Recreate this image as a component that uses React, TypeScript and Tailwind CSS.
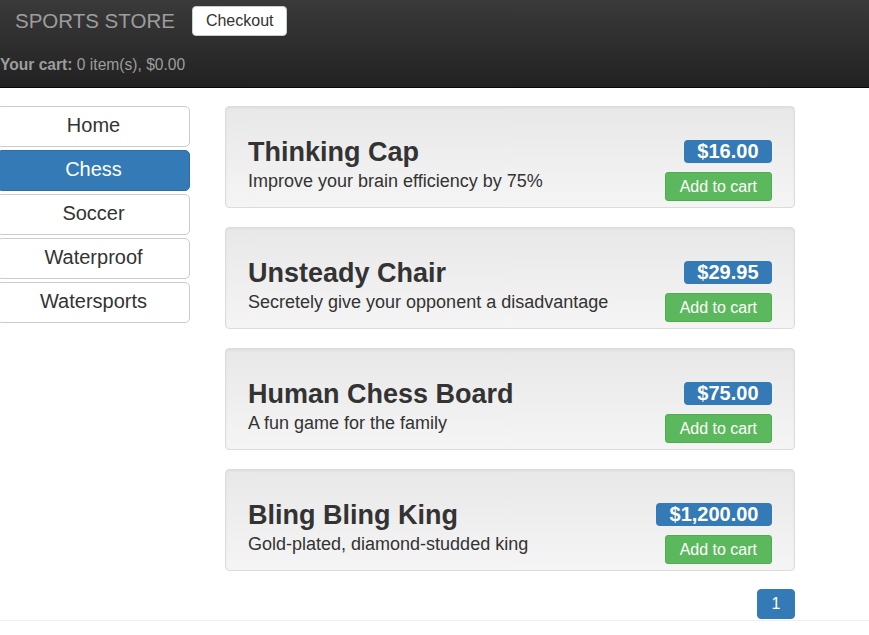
import React from 'react';

const categories = ['Home', 'Chess', 'Soccer', 'Waterproof', 'Watersports'];

const products = [
  { name: 'Thinking Cap', description: 'Improve your brain efficiency by 75%', price: 16 },
  { name: 'Unsteady Chair', description: 'Secretely give your opponent a disadvantage', price: 29.95 },
  { name: 'Human Chess Board', description: 'A fun game for the family', price: 75 },
  { name: 'Bling Bling King', description: 'Gold-plated, diamond-studded king', price: 1200 },
];

const currency = (n: number) =>
  '$' + n.toLocaleString('en-US', { minimumFractionDigits: 2, maximumFractionDigits: 2 });

const App: React.FC = () => {
  const selected = 'Chess';

  return (
    <div className="min-h-screen bg-white text-[#333] font-['Liberation_Sans',Arial,sans-serif]">
      {/* navbar */}
      <div className="h-[88px] bg-gradient-to-b from-[#3a3a3a] to-[#222] border-b border-[#080808]">
        <div className="flex items-center h-[41px] pt-[1px]">
          <span className="pl-[15px] text-[20.5px] text-[#9d9d9d] leading-none">SPORTS STORE</span>
          <button className="ml-[17px] h-[30px] px-[13px] bg-white border border-[#ccc] rounded-[4px] text-[16px] text-[#333]">
            Checkout
          </button>
        </div>
        <div className="mt-[14px] text-[15.6px] leading-[20px] text-[#9d9d9d]">
          <b>Your cart:</b> 0 item(s), $0.00
        </div>
      </div>

      <div className="flex pt-[18px] border-b border-[#f0f0f0] pb-[1px]">
        {/* categories */}
        <div className="-ml-[3px] w-[193px] flex flex-col gap-[3px]">
          {categories.map((c) => (
            <button
              key={c}
              className={
                c === selected
                  ? 'h-[41px] pb-[4px] rounded-[5px] border border-[#2e6da4] bg-[#337ab7] text-white text-[20px]'
                  : 'h-[41px] pb-[4px] rounded-[5px] border border-[#ccc] bg-white text-[#333] text-[20px]'
              }
            >
              {c}
            </button>
          ))}
        </div>

        {/* products */}
        <div className="ml-[35px] w-[570px]">
          <div className="flex flex-col gap-[19px]">
            {products.map((p) => (
              <div
                key={p.name}
                className="flex justify-between rounded-[4px] border border-[#dcdcdc] bg-gradient-to-b from-[#e8e8e8] to-[#f5f5f5] shadow-[inset_0_1px_3px_rgba(0,0,0,0.05)] pl-[22px] pr-[22px] pt-[30px] pb-[6px]"
              >
                <div>
                  <div className="text-[27px] font-bold leading-[30px]">{p.name}</div>
                  <div className="mt-[3px] text-[18px] leading-[22px]">{p.description}</div>
                </div>
                <div className="flex flex-col items-end">
                  <span className="mt-[3px] h-[23px] px-[13.5px] rounded-[4px] bg-[#337ab7] text-white text-[20px] font-bold leading-[23px]">
                    {currency(p.price)}
                  </span>
                  <button className="mt-[9px] h-[29px] px-[14px] rounded-[3px] border border-[#4cae4c] bg-[#5cb85c] text-white text-[16px] leading-none">
                    Add to cart
                  </button>
                </div>
              </div>
            ))}
          </div>
          <div className="flex justify-end mt-[18px]">
            <button className="h-[30px] w-[38px] rounded-[4px] border border-[#337ab7] bg-[#337ab7] text-white text-[16px]">
              1
            </button>
          </div>
        </div>
      </div>
    </div>
  );
};

export default App;
